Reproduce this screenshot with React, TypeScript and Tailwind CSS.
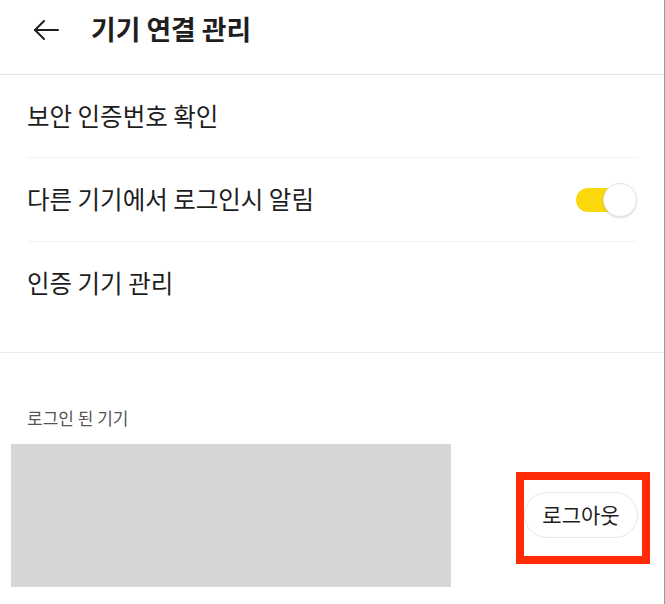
import React from "react";

const font = { fontFamily: '"Noto Sans CJK KR", "Noto Sans", sans-serif' };

export default function App() {
  return (
    <div className="w-[665px] h-[604px] bg-white overflow-hidden border-r border-[#9a9a9a] text-[#1e1e1e]" style={font}>
      <div className="h-[75px] flex items-start pt-[15px] border-b border-[#e3e3e3]">
        <svg width="26" height="22" viewBox="0 0 26 22" className="ml-[33px] mt-[4px]" fill="none" stroke="#1e1e1e" strokeWidth="2" strokeLinecap="round" strokeLinejoin="round">
          <path d="M25 11H2" />
          <path d="M11 2L2 11l9 9" />
        </svg>
        <div className="ml-[32px] text-[26.8px] font-bold leading-[28px]">기기 연결 관리</div>
      </div>
      <div className="pl-[27px] pr-[27px]">
        <div className="h-[83px] flex items-center border-b border-[#f2f2f2] text-[24.5px]">보안 인증번호 확인</div>
        <div className="h-[84px] flex items-center justify-between border-b border-[#f2f2f2] text-[24.5px]">
          <span>다른 기기에서 로그인시 알림</span>
          <div className="relative w-[61px] h-[34px] flex items-center">
            <div className="w-[44px] h-[24px] rounded-full bg-[#fbd70c]" />
            <div className="absolute right-0 top-0 w-[34px] h-[34px] rounded-full bg-white border border-[#e2e2e2] shadow-[0_1px_2px_rgba(0,0,0,0.15)]" />
          </div>
        </div>
        <div className="h-[82px] flex items-center text-[24.5px]">인증 기기 관리</div>
      </div>
      <div className="h-[29px] border-b border-[#ececec]" />
      <div className="pl-[27px] pt-[56px] text-[17px] text-[#555] leading-none">로그인 된 기기</div>
      <div className="flex mt-[18px]">
        <div className="ml-[11px] w-[440px] h-[143px] bg-[#d6d6d6]" />
        <div className="ml-[65px] mt-[28px] w-[134px] h-[92px] border-[8px] border-[#ff2a06] flex items-start">
          <button className="mt-[12px] w-[114px] h-[46px] rounded-full border border-[#e6e6e6] bg-white text-[21px] text-[#1e1e1e]" style={font}>로그아웃</button>
        </div>
      </div>
    </div>
  );
}
